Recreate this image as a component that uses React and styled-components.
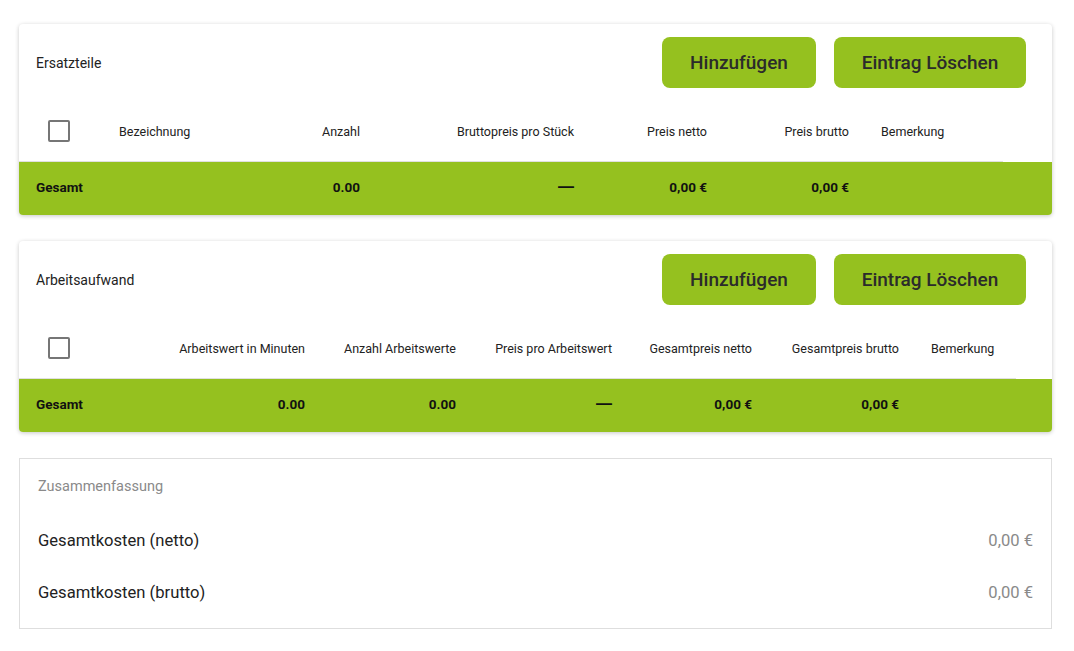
import styled, { createGlobalStyle } from "styled-components";

const GlobalStyle = createGlobalStyle`
body{
margin:0;
background:#fff;
font-family:Roboto, "Liberation Sans", sans-serif;
color:#222;
}
`;

const Page = styled.div`
padding:24px 22px 20px 19px;
display:flex;
flex-direction:column;
gap:26px;
`;

const Card = styled.div`
background:#fff;
border-radius:4px;
box-shadow:0 1px 4px rgba(0,0,0,0.22);
overflow:hidden;
`;

const Toolbar = styled.div`
display:flex;
align-items:center;
justify-content:space-between;
padding:13px 26px 13px 17px;
`;

const Title = styled.div`
font-size:14px;
color:#222;
`;

const Buttons = styled.div`
display:flex;
gap:18px;
`;

const Button = styled.button`
height:51px;
width:${(props) => props.w}px;
border:none;
border-radius:8px;
background:#95c11f;
color:#2b2b2b;
font-family:Roboto, "Liberation Sans", sans-serif;
font-size:19px;
font-weight:500;
cursor:pointer;
`;

const Row = styled.div`
display:grid;
grid-template-columns:${(props) => props.cols};
width:${(props) => props.w}px;
align-items:center;
`;

const HeadRow = styled(Row)`
height:60px;
border-bottom:1px solid #e0e0e0;
`;

const Foot = styled.div`
background:#95c11f;
height:53px;
box-sizing:border-box;
padding-bottom:3px;
display:flex;
align-items:center;
`;

const Cell = styled.div`
padding:0 16px;
font-size:12.5px;
color:#222;
text-align:${(props) => (props.right ? "right" : "left")};
white-space:nowrap;
`;

const FootCell = styled(Cell)`
font-size:13.5px;
font-weight:700;
color:#111;
padding-left:${(props) => (props.first ? "17px" : "16px")};
`;

const Dash = styled.span`
font-family:"Liberation Sans", sans-serif;
font-size:16px;
`;

const CheckCell = styled.div`
display:flex;
justify-content:center;
padding-left:4px;
padding-right:8px;
`;

const Checkbox = styled.div`
width:18px;
height:18px;
border:2px solid #767676;
border-radius:2px;
`;

const Summary = styled.div`
border:1px solid #dedede;
padding:19px 18px 10px 18px;
`;

const SummaryTitle = styled.div`
font-size:14.5px;
line-height:18px;
color:#8a8a8a;
margin-bottom:18px;
`;

const SummaryRow = styled.div`
display:flex;
justify-content:space-between;
align-items:center;
height:52px;
font-size:16.6px;
`;

const Amount = styled.span`
color:#8a8a8a;
`;

const sections = [
  {
    title: "Ersatzteile",
    cols: "84px 157px 116px 214px 133px 142px 138px",
    width: 984,
    head: [
      ["Bezeichnung", false],
      ["Anzahl", true],
      ["Bruttopreis pro Stück", true],
      ["Preis netto", true],
      ["Preis brutto", true],
      ["Bemerkung", false],
    ],
    foot: ["", "0.00", "—", "0,00 €", "0,00 €", ""],
  },
  {
    title: "Arbeitsaufwand",
    cols: "84px 218px 151px 156px 140px 147px 101px",
    width: 997,
    head: [
      ["Arbeitswert in Minuten", true],
      ["Anzahl Arbeitswerte", true],
      ["Preis pro Arbeitswert", true],
      ["Gesamtpreis netto", true],
      ["Gesamtpreis brutto", true],
      ["Bemerkung", false],
    ],
    foot: ["0.00", "0.00", "—", "0,00 €", "0,00 €", ""],
  },
];

const Section = ({ data }) => (
  <Card>
    <Toolbar>
      <Title>{data.title}</Title>
      <Buttons>
        <Button w={154}>Hinzufügen</Button>
        <Button w={192}>Eintrag Löschen</Button>
      </Buttons>
    </Toolbar>
    <HeadRow cols={data.cols} w={data.width}>
      <CheckCell>
        <Checkbox />
      </CheckCell>
      {data.head.map(([label, right]) => (
        <Cell key={label} right={right}>{label}</Cell>
      ))}
    </HeadRow>
    <Foot>
      <Row cols={data.cols} w={data.width}>
        <FootCell first>Gesamt</FootCell>
        {data.foot.map((v, i) => (
          <FootCell key={i} right={data.head[i][1]}>
            {v === "—" ? <Dash>{v}</Dash> : v}
          </FootCell>
        ))}
      </Row>
    </Foot>
  </Card>
);

const App = () => {
  return (
    <Page>
      <GlobalStyle />
      {sections.map((s) => (
        <Section key={s.title} data={s} />
      ))}
      <Summary>
        <SummaryTitle>Zusammenfassung</SummaryTitle>
        <SummaryRow>
          <span>Gesamtkosten (netto)</span>
          <Amount>0,00 €</Amount>
        </SummaryRow>
        <SummaryRow>
          <span>Gesamtkosten (brutto)</span>
          <Amount>0,00 €</Amount>
        </SummaryRow>
      </Summary>
    </Page>
  );
};

export default App;
